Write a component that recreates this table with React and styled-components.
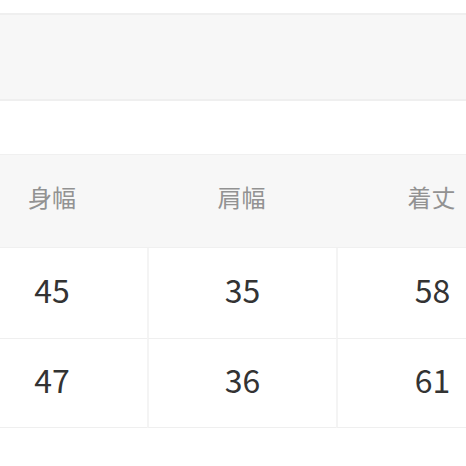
import styled, { createGlobalStyle } from 'styled-components';

const GlobalStyle = createGlobalStyle`
  html, body {
    margin: 0;
    padding: 0;
    background: #fff;
    overflow: hidden;
  }
  body {
    font-family: "Noto Sans CJK JP", "Noto Sans", sans-serif;
  }
`;

const Page = styled.div`
  width: 466px;
  height: 466px;
  overflow: hidden;
  padding-top: 13px;
  box-sizing: border-box;
`;

const Band = styled.div`
  height: 84px;
  background: #f7f7f7;
  border-top: 2px solid #efefef;
  border-bottom: 2px solid #efefef;
`;

const Table = styled.div`
  margin-top: 53px;
  margin-left: -43px;
  width: 570px;
  display: grid;
  grid-template-columns: 190px 189px 191px;
  border-top: 1px solid #f0f0f0;
`;

const HeadCell = styled.div`
  height: 93px;
  background: #f7f7f7;
  display: flex;
  align-items: center;
  justify-content: center;
  font-size: 24px;
  line-height: 1;
  padding-bottom: 8px;
  box-sizing: border-box;
  color: #929292;
  border-bottom: 1px solid #f0f0f0;
`;

const Cell = styled.div`
  height: ${p => p.$h}px;
  display: flex;
  align-items: center;
  justify-content: center;
  font-size: 32px;
  line-height: 1;
  padding-bottom: 9px;
  color: #333;
  border-bottom: 1px solid #efefef;
  border-left: ${p => (p.$first ? 'none' : '2px solid #f4f4f4')};
  box-sizing: border-box;
`;

const heads = ['身幅', '肩幅', '着丈'];
const rows = [
  { h: 91, values: ['45', '35', '58'] },
  { h: 89, values: ['47', '36', '61'] },
];

export default function App() {
  return (
    <>
      <GlobalStyle />
      <Page>
        <Band />
        <Table>
          {heads.map(h => (
            <HeadCell key={h}>{h}</HeadCell>
          ))}
          {rows.map((r, i) =>
            r.values.map((v, j) => (
              <Cell key={`${i}-${j}`} $h={r.h} $first={j === 0}>
                {v}
              </Cell>
            ))
          )}
        </Table>
      </Page>
    </>
  );
}
